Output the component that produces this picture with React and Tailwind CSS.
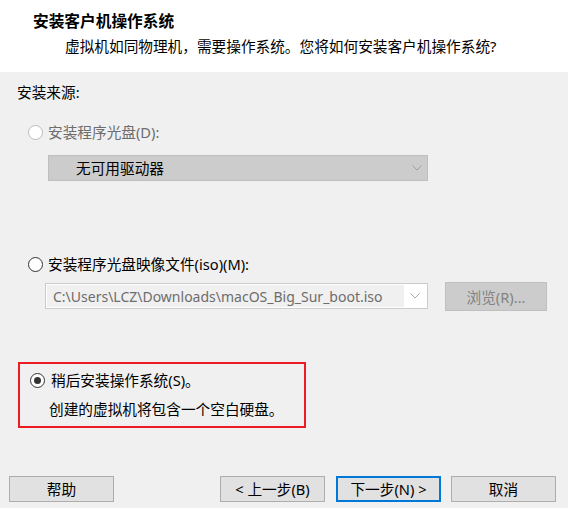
import React from 'react'

const font = "font-['Noto_Sans','Noto_Sans_CJK_SC',sans-serif]"

function Radio({ checked, disabled }) {
  return (
    <span
      className={
        'w-[15px] h-[15px] rounded-full border flex items-center justify-center shrink-0 bg-white ' +
        (disabled ? 'border-[#bcbcbc]' : 'border-[#333333]')
      }
    >
      {checked && <span className="w-[7px] h-[7px] rounded-full bg-[#333333]" />}
    </span>
  )
}

function Chevron({ color }) {
  return (
    <svg width="10" height="6" viewBox="0 0 10 6" className="shrink-0">
      <path d="M0.5 0.5 L5 5 L9.5 0.5" fill="none" stroke={color} strokeWidth="1" />
    </svg>
  )
}

function Button({ children, primary }) {
  return (
    <button
      className={
        'w-[105px] h-[26px] bg-[#e1e1e1] text-[14.67px] text-black flex items-center justify-center ' +
        (primary ? 'border-2 border-[#0078d7]' : 'border border-[#adadad]')
      }
    >
      {children}
    </button>
  )
}

export default function App() {
  return (
    <div className={`w-[568px] h-[508px] bg-[#f0f0f0] flex flex-col text-black ${font}`}>
      <div className="h-[72px] bg-white pl-[33px] pt-[11px] shrink-0">
        <div className="text-[15.7px] font-bold leading-[20px]">安装客户机操作系统</div>
        <div className="text-[14.67px] leading-[20px] mt-[5px] pl-[32px]">
          虚拟机如同物理机，需要操作系统。您将如何安装客户机操作系统?
        </div>
      </div>

      <div className="flex-1 flex flex-col pt-[10px]">
        <div className="pl-[17px] text-[14.67px] leading-[20px]">安装来源:</div>

        <div className="pl-[28px] mt-[20px] h-[20px] flex items-center gap-[5px] text-[14.67px] text-[#6d6d6d]">
          <Radio disabled />
          <span>安装程序光盘(D):</span>
        </div>
        <div className="ml-[48px] mt-[13px] w-[380px] h-[26px] bg-[#cccccc] border border-[#bfbfbf] flex items-center pl-[27px] pr-[5px] text-[14.67px]">
          <span className="flex-1">无可用驱动器</span>
          <Chevron color="#a0a0a0" />
        </div>

        <div className="pl-[28px] mt-[73px] h-[20px] flex items-center gap-[5px] text-[14.67px]">
          <Radio />
          <span>安装程序光盘映像文件(iso)(M):</span>
        </div>
        <div className="mt-[8px] pl-[45px] flex items-start">
          <div className="mt-[1px] w-[383px] h-[26px] bg-white border border-[#cccccc] flex items-center p-[1px]">
            <div className="w-[357px] h-full bg-[#f0f0f0] flex items-center pl-[6px] text-[14px] text-[#6d6d6d] whitespace-nowrap overflow-hidden">
              C:\Users\LCZ\Downloads\macOS_Big_Sur_boot.iso
            </div>
            <div className="flex-1 flex justify-center">
              <Chevron color="#a8a8a8" />
            </div>
          </div>
          <div className="ml-[17px] w-[102px] h-[29px] bg-[#cccccc] border border-[#bfbfbf] flex items-center justify-center text-[14.67px] text-[#838383]">
            浏览(R)...
          </div>
        </div>

        <div className="ml-[18px] mt-[51px] w-[288px] h-[66px] border-2 border-[#ed1c24] pl-[8px] pt-[6px]">
          <div className="h-[20px] flex items-center gap-[6px] pl-[2px] text-[14.67px]">
            <Radio checked />
            <span>稍后安装操作系统(S)。</span>
          </div>
          <div className="mt-[9px] pl-[21px] text-[14.67px] leading-[20px]">创建的虚拟机将包含一个空白硬盘。</div>
        </div>

        <div className="mt-auto mb-[6px] pl-[9px] pr-[12px] flex items-center">
          <Button>帮助</Button>
          <div className="ml-auto flex gap-[11px]">
            <Button>&lt; 上一步(B)</Button>
            <Button primary>下一步(N) &gt;</Button>
          </div>
          <div className="ml-[10px]">
            <Button>取消</Button>
          </div>
        </div>
      </div>
    </div>
  )
}
